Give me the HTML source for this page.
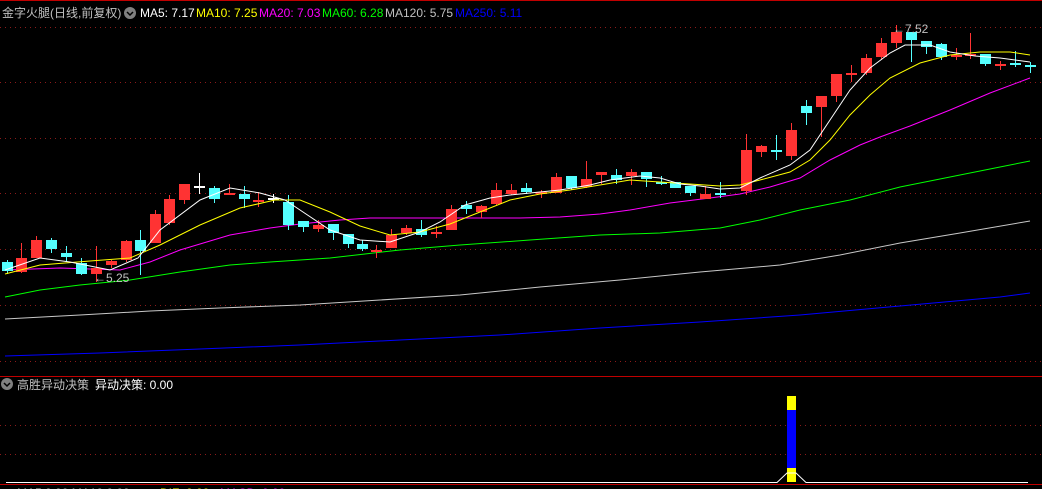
<!DOCTYPE html>
<html><head><meta charset="utf-8"><style>
html,body{margin:0;padding:0;background:#000;width:1042px;height:489px;overflow:hidden}
svg{display:block}
text{font-family:"Liberation Sans","Noto Sans CJK SC",sans-serif;font-size:12px}
</style></head><body>
<svg id="s" width="1042" height="489" xmlns="http://www.w3.org/2000/svg">
<rect width="1042" height="489" fill="#000"/>
<line x1="0" y1="0.5" x2="1042" y2="0.5" stroke="#c00000"/>
<g stroke="#8b1a1a" stroke-dasharray="1,4">
<line x1="0" y1="27.5" x2="1042" y2="27.5"/><line x1="0" y1="82.5" x2="1042" y2="82.5"/>
<line x1="0" y1="138.5" x2="1042" y2="138.5"/><line x1="0" y1="193.5" x2="1042" y2="193.5"/>
<line x1="0" y1="249.5" x2="1042" y2="249.5"/><line x1="0" y1="305.5" x2="1042" y2="305.5"/>
<line x1="0" y1="361.5" x2="1042" y2="361.5"/>
<line x1="0" y1="425.5" x2="1042" y2="425.5"/><line x1="0" y1="454.5" x2="1042" y2="454.5"/>
</g>
<line x1="0" y1="376.5" x2="1042" y2="376.5" stroke="#c00000"/>
<g fill="none" stroke-width="1">
<polyline stroke="#0000ff" points="5,356 100,353 200,349 300,345 400,340 500,335 600,328 700,322 800,315 900,306 1000,297 1030,293"/>
<polyline stroke="#c8c8c8" points="5,319 80,315 150,311 220,308 300,305 380,300 460,295 540,287 620,280 700,272 780,265 840,255 900,243 960,233 1030,221"/>
<polyline stroke="#00ff00" points="5,297 40,290 80,285 130,280 180,272 230,265 270,262 330,258 400,250 460,245 530,240 600,235 660,233 720,228 760,220 800,210 850,200 900,187 950,177 1000,167 1030,161"/>
<polyline stroke="#ff00ff" points="5,270 60,268 120,270 150,262 180,250 230,235 270,228 300,224 340,220 370,218 420,218 470,218 520,218 560,217 600,214 630,210 670,203 710,198 740,194 770,187 800,178 830,160 860,145 880,137 910,126 950,110 990,93 1030,78"/>
</g>
<g id="c"></g>
<g fill="none">
<polyline stroke="#ffff00" points="5,274 40,265 90,261 130,258 160,245 200,225 240,208 275,200 300,200 330,212 360,226 390,235 420,232 450,224 480,212 510,200 540,194 570,190 600,185 630,180 660,182 690,184 720,186 740,185 760,180 790,172 810,160 830,140 850,115 870,95 890,78 920,63 950,55 980,52 1010,52 1030,55"/>
<polyline stroke="#ffffff" points="5,270 40,258 70,262 110,270 138,258 160,230 200,200 230,188 260,193 285,200 300,210 330,230 360,240 390,242 420,232 440,222 465,205 490,198 510,195 540,192 560,190 590,185 610,180 640,176 660,178 680,184 700,186 720,189 740,188 760,178 790,165 810,150 830,120 850,90 870,68 890,53 905,45 930,45 950,52 975,56 1000,58 1030,62"/>
</g>
<text x="94" y="282" fill="#c0c0c0">←5.25</text>
<text x="893" y="33" fill="#c0c0c0">←7.52</text>
<!-- header -->
<text x="2" y="17" fill="#c0c0c0">金字火腿(日线,前复权)</text>
<circle cx="130" cy="13" r="6" fill="#808080"/><path d="M127 12 L130 15 L133 12" stroke="#000" fill="none" stroke-width="1.5"/>
<text x="140" y="17" fill="#ffffff">MA5: 7.17</text>
<text x="196" y="17" fill="#ffff00">MA10: 7.25</text>
<text x="259" y="17" fill="#ff00ff">MA20: 7.03</text>
<text x="322" y="17" fill="#00ff00">MA60: 6.28</text>
<text x="385" y="17" fill="#c0c0c0">MA120: 5.75</text>
<text x="455" y="17" fill="#0000ff">MA250: 5.11</text>
<circle cx="7" cy="384" r="6" fill="#808080"/><path d="M4 383 L7 386 L10 383" stroke="#000" fill="none" stroke-width="1.5"/>
<text x="17" y="389" fill="#c0c0c0">高胜异动决策</text>
<text x="95" y="389" fill="#ffffff">异动决策: 0.00</text>
<!-- lower panel -->
<rect x="787" y="396" width="9" height="14" fill="#ffff00"/>
<rect x="787" y="410" width="9" height="58" fill="#0000ff"/>
<rect x="787" y="468" width="9" height="14" fill="#ffff00"/>
<polyline fill="none" stroke="#fff" points="6,482.5 777,482.5 787,473 796,473 806,482.5 1028,482.5"/>
<line x1="0" y1="484.5" x2="1042" y2="484.5" stroke="#c00000"/>
<text x="17" y="497" fill="#c0c0c0">MA5:0.00 MA10:0.00</text>
<text x="160" y="497" fill="#ffff00">DIF: 0.00</text>
<text x="220" y="497" fill="#ff00ff">MACD: 0.00</text>
</svg>
<script>
var C=[
[7,'c',262,271,260,274],[21,'r',258,272,243,273],[36,'r',240,258,236,258],[51,'c',240,249,238,253],[66,'c',253,257,246,262],
[81,'c',263,274,258,275],[96,'r',268,274,246,282],[111,'r',261,265,260,268],[126,'r',241,260,240,262],[140,'c',240,251,230,275],
[155,'r',214,243,210,243],[169,'r',199,223,195,225],[184,'r',184,200,184,204],[199,'w',186,186,173,194],[214,'c',188,199,186,203],
[229,'r',193,195,184,195],[244,'c',194,199,186,208],[258,'r',200,200,192,207],[273,'w',198,198,194,203],[288,'c',202,225,195,230],
[303,'c',221,227,221,232],[318,'r',225,229,220,232],[333,'c',224,233,224,240],[348,'c',234,244,234,248],[362,'c',244,249,240,251],
[376,'r',250,250,245,258],[391,'r',235,248,229,248],[406,'r',228,233,225,235],[421,'c',229,235,220,237],[436,'r',232,232,226,238],
[451,'r',209,230,205,230],[466,'c',205,209,201,214],[481,'r',206,212,205,218],[496,'r',190,204,183,205],[511,'r',190,194,184,195],
[526,'c',188,192,183,194],[541,'r',192,192,190,198],[556,'r',177,193,173,193],[571,'c',176,188,176,190],[586,'r',179,187,161,188],
[601,'r',172,175,172,184],[616,'c',175,180,169,184],[631,'r',172,176,169,185],[646,'c',172,179,172,187],[661,'c',182,182,176,185],
[675,'c',182,188,182,188],[690,'c',186,193,186,196],[705,'r',194,199,186,199],[720,'c',193,193,182,198],[746,'r',150,191,134,195],
[761,'r',146,152,145,157],[776,'c',150,150,135,160],[791,'r',130,156,123,160],[806,'c',106,113,100,125],[821,'r',96,107,96,137],
[836,'r',74,96,74,102],[851,'r',73,73,65,82],[866,'r',58,73,54,75],[881,'r',43,57,38,60],[896,'r',32,43,25,48],
[911,'c',32,40,32,62],[926,'c',41,47,41,54],[941,'c',44,57,43,60],[956,'r',55,55,48,60],[970,'r',54,54,33,59],
[985,'c',54,64,54,66],[1000,'r',64,64,61,70],[1015,'c',63,65,51,67],[1030,'c',65,65,62,73]];
var g=document.getElementById('c'),h='';
C.forEach(function(k){var x=k[0],col=k[1]=='r'?'#ff3333':(k[1]=='c'?'#54ffff':'#ffffff');
h+='<line x1="'+(x+.5)+'" y1="'+k[4]+'" x2="'+(x+.5)+'" y2="'+k[5]+'" stroke="'+col+'"/>';
var hh=k[3]-k[2];if(hh<2)h+='<rect x="'+(x-5)+'" y="'+k[2]+'" width="11" height="2" fill="'+col+'"/>';
else h+='<rect x="'+(x-5)+'" y="'+k[2]+'" width="11" height="'+hh+'" fill="'+col+'"/>';});
g.innerHTML=h;
</script>
</body></html>
